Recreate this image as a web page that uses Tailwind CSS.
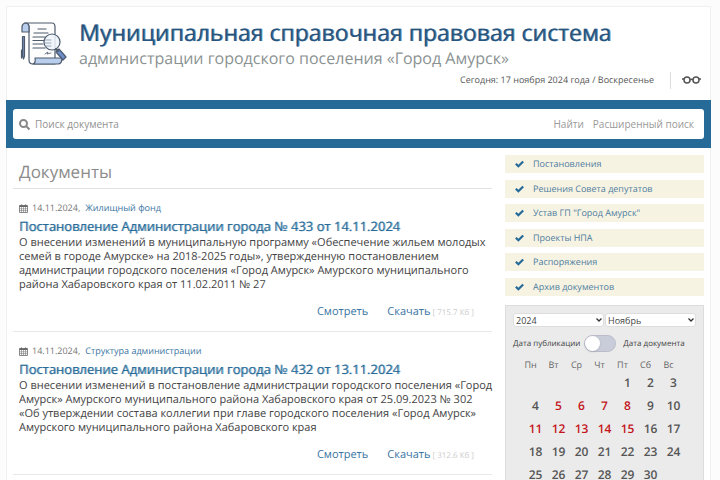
<!DOCTYPE html>
<html lang="ru">
<head>
  <meta charset="UTF-8" />
  <meta name="viewport" content="width=device-width, initial-scale=1" />
  <title>Муниципальная справочная правовая система</title>
  <script src="https://cdn.jsdelivr.net/npm/@tailwindcss/browser@4"></script>
</head>
<body class="bg-[#fcfcfc] text-[#444] font-['Open_Sans',sans-serif] [text-rendering:geometricPrecision] h-screen overflow-hidden">
  <!-- Icons -->
  <svg class="hidden">
    <symbol id="calendar" viewBox="0 0 18 18">
      <path d="M1 3h16v14H1z" fill="none" stroke="currentColor" stroke-width="1.5" />
      <path d="M1 3h16v3H1z" fill="currentColor" />
      <path d="M5 1v4M13 1v4" stroke="currentColor" stroke-width="2.5" />
      <path d="M5 6v11M9 6v11M13 6v11M1 9.500h16M1 13.200h16" stroke="currentColor" stroke-width="1" />
    </symbol>
    <symbol id="check" viewBox="0 0 16 14">
      <path d="M1.500 6.500 6 11 14.500 2.500" fill="none" stroke="currentColor" stroke-width="4" />
    </symbol>
  </svg>

  <div class="ml-[6px] mt-[6px] mr-[9px] border border-[#f0f0f0] bg-white">
    <!-- Header -->
    <header class="flex pl-[13px] pt-[13px] h-[93px]">
      <svg class="w-[48px] h-[46px] mt-[1px] shrink-0" viewBox="0 0 48 46" fill="none" stroke="#4d5a6c" stroke-width="1.200" stroke-linejoin="round" stroke-linecap="round">
        <path d="M5 2h27q3 0 3 4v37H13q-4 0-4-4V6q0-4-4-4Z" fill="#fdfdfe" />
        <path d="M5 2q-3 1-3 4v5h7V6q0-4-4-4Z" fill="#b9cdec" />
        <path d="M15 37h27q0 6-4 6H13q3-1 2-6Z" fill="#b9cdec" />
        <path d="M18 8h8M14 12h14M13 16h12M13 19.500h11M13 23h10M13 27h12" stroke-width="1.200" />
        <path d="m25 33 3-2-1 2 4-1" stroke-width="0.800" />
        <circle cx="32" cy="21" r="8" fill="#eef5fc" fill-opacity="0.850" />
        <path d="M25 19h6M25 22h6M26 25h5" stroke="#9aa7b6" stroke-width="1" />
        <path d="m36 31 3-3 7 8-3 3Z" fill="#6c8fca" />
        <path d="m36 28 2 2" stroke-width="2" />
        <path d="M3 15.500h1.500V35L3.500 38 2.500 35V16Z" fill="#7890ba" />
        <path d="M1.500 29v8" />
      </svg>
      <div class="ml-[11px] flex-1 min-w-0 whitespace-nowrap">
        <h1 class="text-[23px] leading-[25px] font-normal text-[#25557f] [text-shadow:1px_0_0_#25557faa]">Муниципальная справочная правовая система</h1>
        <p class="text-[16px] leading-[26px] text-[#8a9292]">администрации городского поселения «Город Амурск»</p>
        <div class="flex justify-end items-center pr-[9px] h-[18px] text-[9px] text-[#555]">
          <span>Сегодня: 17 ноября 2024 года / Воскресенье</span>
          <a href="#" aria-label="Версия для слабовидящих" class="ml-[16px] pl-[11px] border-l border-[#ddd] h-[17px] flex items-center text-[#555]">
            <svg class="w-[19px] h-[8px]" viewBox="0 0 19 8" fill="none" stroke="currentColor" stroke-width="1.500">
              <circle cx="5" cy="4" r="3" /><circle cx="14" cy="4" r="3" />
              <path d="M8 4q1.500-1.500 3 0M2 3H0M17 3h2" />
            </svg>
          </a>
        </div>
      </div>
    </header>

    <!-- Search -->
    <form class="-mx-px bg-[#266b98] px-[7px] py-[9px]">
      <div class="bg-white rounded-[3px] h-[30px] flex items-center px-[6px] pr-[10px] text-[10px] text-[#999]">
        <svg class="w-[11px] h-[11px] shrink-0" viewBox="0 0 11 11" fill="none" stroke="#888" stroke-width="2">
          <circle cx="4.500" cy="4.500" r="3.500" /><path d="m7 7 3.500 3.500" />
        </svg>
        <input type="text" aria-label="Поиск документа" placeholder="Поиск документа" class="ml-[5px] flex-1 min-w-0 outline-none placeholder:text-[#929292]" />
        <button type="button">Найти</button>
        <button type="button" class="ml-[9px]">Расширенный поиск</button>
      </div>
    </form>

    <div class="flex px-[6px] pt-[7px]">
      <!-- Documents -->
      <main class="flex-1 min-w-0 mr-[13px]">
        <h2 class="text-[17px] leading-[33px] pl-[6px] text-[#8c8c8c] border-b border-[#e2e2e2]">Документы</h2>

        <article class="border-b border-[#e8e8e8] px-[6px] pt-[12px] h-[143px]">
          <div class="flex items-center text-[9px] leading-[14px] text-[#777]">
            <svg class="w-[9px] h-[9px] mr-[4px] text-[#666]"><use href="#calendar" /></svg>
            <span>14.11.2024,</span>
            <a href="#" class="ml-[5px] text-[#3a75a3]">Жилищный фонд</a>
          </div>
          <h3 class="mt-[2px] text-[13px] leading-[18px] font-normal"><a href="#" class="text-[#266b98] [text-shadow:1px_0_0_#266b9888]">Постановление Администрации города № 433 от 14.11.2024</a></h3>
          <p class="pt-[1px] text-[11px] leading-[14px] whitespace-nowrap">О внесении изменений в муниципальную программу «Обеспечение жильем молодых<br>семей в городе Амурске» на 2018-2025 годы», утвержденную постановлением<br>администрации городского поселения «Город Амурск» Амурского муниципального<br>района Хабаровского края от 11.02.2011 № 27</p>
          <div class="flex justify-end items-baseline mt-[12px] pr-[12px] text-[11px] leading-[16px]">
            <a href="#" class="text-[#3a75a3]">Смотреть</a>
            <a href="#" class="ml-[19px] text-[#3a75a3]">Скачать</a>
            <span class="ml-[2px] text-[8px] text-[#ccc]">[ 715.7 Кб ]</span>
          </div>
        </article>

        <article class="border-b border-[#e8e8e8] px-[6px] pt-[12px] h-[143px]">
          <div class="flex items-center text-[9px] leading-[14px] text-[#777]">
            <svg class="w-[9px] h-[9px] mr-[4px] text-[#666]"><use href="#calendar" /></svg>
            <span>14.11.2024,</span>
            <a href="#" class="ml-[5px] text-[#3a75a3]">Структура администрации</a>
          </div>
          <h3 class="mt-[2px] text-[13px] leading-[18px] font-normal"><a href="#" class="text-[#266b98] [text-shadow:1px_0_0_#266b9888]">Постановление Администрации города № 432 от 13.11.2024</a></h3>
          <p class="pt-[1px] text-[11px] leading-[14px] whitespace-nowrap">О внесении изменений в постановление администрации городского поселения «Город<br>Амурск» Амурского муниципального района Хабаровского края от 25.09.2023 № 302<br>«Об утверждении состава коллегии при главе городского поселения «Город Амурск»<br>Амурского муниципального района Хабаровского края</p>
          <div class="flex justify-end items-baseline mt-[12px] pr-[12px] text-[11px] leading-[16px]">
            <a href="#" class="text-[#3a75a3]">Смотреть</a>
            <a href="#" class="ml-[19px] text-[#3a75a3]">Скачать</a>
            <span class="ml-[2px] text-[8px] text-[#ccc]">[ 312.6 Кб ]</span>
          </div>
        </article>
      </main>

      <!-- Sidebar -->
      <aside class="w-[199px] shrink-0">
        <nav class="flex flex-col justify-between h-[141px] text-[9px] leading-[18px] text-[#4d7d9f]">
          <a href="#" class="flex items-center bg-[#f7f3e3] pl-[10px]"><svg class="w-[9px] h-[8px] mr-[9px] text-[#266b98]"><use href="#check" /></svg>Постановления</a>
          <a href="#" class="flex items-center bg-[#f7f3e3] pl-[10px]"><svg class="w-[9px] h-[8px] mr-[9px] text-[#266b98]"><use href="#check" /></svg>Решения Совета депутатов</a>
          <a href="#" class="flex items-center bg-[#f7f3e3] pl-[10px]"><svg class="w-[9px] h-[8px] mr-[9px] text-[#266b98]"><use href="#check" /></svg>Устав ГП "Город Амурск"</a>
          <a href="#" class="flex items-center bg-[#f7f3e3] pl-[10px]"><svg class="w-[9px] h-[8px] mr-[9px] text-[#266b98]"><use href="#check" /></svg>Проекты НПА</a>
          <a href="#" class="flex items-center bg-[#f7f3e3] pl-[10px]"><svg class="w-[9px] h-[8px] mr-[9px] text-[#266b98]"><use href="#check" /></svg>Распоряжения</a>
          <a href="#" class="flex items-center bg-[#f7f3e3] pl-[10px]"><svg class="w-[9px] h-[8px] mr-[9px] text-[#266b98]"><use href="#check" /></svg>Архив документов</a>
        </nav>

        <!-- Calendar -->
        <section class="mt-[9px] border border-[#ddd] bg-[#ebebeb] px-[7px] pt-[7px] pb-[12px]">
          <div class="flex gap-[1px] text-[9px]">
            <div class="flex-1 relative">
              <select aria-label="Год" class="block appearance-none w-full h-[14px] bg-white border border-[#ddd] rounded-[3px] pl-[2px]"><option>2024</option></select>
              <svg class="absolute right-[2px] top-[5px] w-[6px] h-[4px] pointer-events-none" viewBox="0 0 6 4" fill="none" stroke="#333" stroke-width="1.300"><path d="m.5.5 2.500 2.500L5.500.5" /></svg>
            </div>
            <div class="flex-1 relative">
              <select aria-label="Месяц" class="block appearance-none w-full h-[14px] bg-white border border-[#ddd] rounded-[3px] pl-[2px]"><option>Ноябрь</option></select>
              <svg class="absolute right-[2px] top-[5px] w-[6px] h-[4px] pointer-events-none" viewBox="0 0 6 4" fill="none" stroke="#333" stroke-width="1.300"><path d="m.5.5 2.500 2.500L5.500.5" /></svg>
            </div>
          </div>
          <label class="flex items-center mt-[8px] text-[8px] leading-[17px]">
            Дата публикации
            <input type="checkbox" class="appearance-none ml-[4px] mr-[7px] w-[32px] h-[17px] rounded-full bg-[#c9cdd9] border border-[#bbc] before:block before:size-[15px] before:rounded-full before:bg-white before:shadow" />
            Дата документа
          </label>
          <table class="mt-[7px] ml-[11px] table-fixed w-[161px] text-center text-[12px] leading-[16px] text-[#555]">
            <thead class="text-[9px] leading-[12px] text-[#666]">
              <tr><th class="font-normal pr-[10px]">Пн</th><th class="font-normal pr-[10px]">Вт</th><th class="font-normal pr-[10px]">Ср</th><th class="font-normal pr-[10px]">Чт</th><th class="font-normal pr-[10px]">Пт</th><th class="font-normal pr-[10px]">Сб</th><th class="font-normal pr-[10px]">Вс</th></tr>
            </thead>
            <tbody class="font-semibold">
              <tr class="h-[23px]"><td></td><td></td><td></td><td></td><td>1</td><td>2</td><td>3</td></tr>
              <tr class="h-[23px]"><td>4</td><td class="text-[#c4151c]">5</td><td class="text-[#c4151c]">6</td><td class="text-[#c4151c]">7</td><td class="text-[#c4151c]">8</td><td>9</td><td>10</td></tr>
              <tr class="h-[23px] text-[#c4151c]"><td>11</td><td>12</td><td>13</td><td>14</td><td>15</td><td class="text-[#555]">16</td><td class="text-[#555]">17</td></tr>
              <tr class="h-[23px]"><td>18</td><td>19</td><td>20</td><td>21</td><td>22</td><td>23</td><td>24</td></tr>
              <tr class="h-[23px]"><td>25</td><td>26</td><td>27</td><td>28</td><td>29</td><td>30</td><td></td></tr>
            </tbody>
          </table>
        </section>
      </aside>
    </div>
  </div>
</body>
</html>
